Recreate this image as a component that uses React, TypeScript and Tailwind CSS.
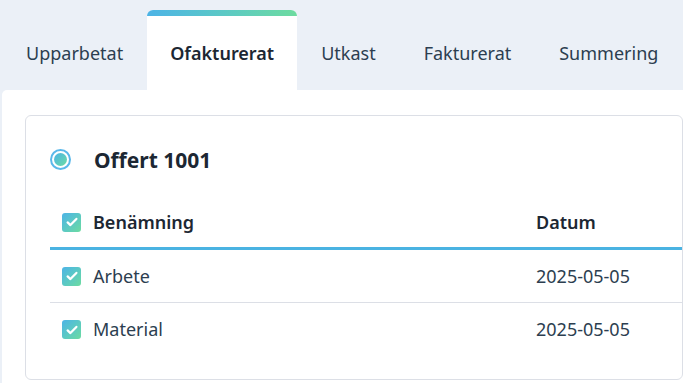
import React from "react";

const tabs = ["Upparbetat", "Ofakturerat", "Utkast", "Fakturerat", "Summering"];

function Check() {
  return (
    <span className="flex h-[19px] w-[19px] shrink-0 items-center justify-center rounded-[3px] bg-gradient-to-br from-[#4db3e6] to-[#6ddb9f]">
      <svg width="14" height="14" viewBox="0 0 16 16" fill="none">
        <path d="M3 8.5l3.2 3L13 4.5" stroke="white" strokeWidth="2.6" strokeLinecap="round" strokeLinejoin="round" />
      </svg>
    </span>
  );
}

export default function App() {
  const font = { fontFamily: '"Noto Sans", "Open Sans", sans-serif' };
  return (
    <div className="h-[383px] w-[683px] overflow-hidden bg-[#ebf0f7] pl-[2px] text-[#2c3e50]" style={font}>
      <div className="flex h-[90px] items-end">
        {tabs.map((t, i) =>
          i === 1 ? (
            <div
              key={t}
              className="relative flex h-[80px] w-[150px] items-center justify-center rounded-t-[6px] bg-white pt-[6px] text-[18px] font-semibold text-[#1c2733]"
            >
              <div className="absolute left-0 right-0 top-0 h-[6px] rounded-t-[6px] bg-gradient-to-r from-[#4db3e6] to-[#6ddb9f]" />
              {t}
            </div>
          ) : (
            <div key={t} className="flex h-[80px] items-center px-6 pt-[6px] text-[18px] text-[#2c3e50]">
              {t}
            </div>
          )
        )}
      </div>
      <div className="h-[293px] rounded-tl-[5px] bg-white pl-[23px] pt-[25px]">
        <div className="h-[265px] rounded-[6px] border border-[#dcdfe6] pl-[24px] pt-[22px]">
          <div className="flex h-[42px] items-center">
            <span className="flex h-[21px] w-[21px] items-center justify-center rounded-full border-2 border-[#5ab8ea] bg-white">
              <span className="h-[13px] w-[13px] rounded-full bg-gradient-to-br from-[#4db3e6] to-[#6ddb9f]" />
            </span>
            <span className="ml-[23px] pt-[3px] text-[21px] font-bold text-[#1c2733]">Offert 1001</span>
          </div>
          <div className="mt-[20px]">
            <div className="flex h-[50px] items-center border-b-[3px] border-[#4ab3e2] pb-[3px]">
              <div className="flex w-[474px] items-center gap-3 pl-3 text-[18px] font-semibold text-[#1c2733]">
                <Check />
                Benämning
              </div>
              <div className="pl-[12px] text-[18px] font-semibold text-[#1c2733]">Datum</div>
            </div>
            {["Arbete", "Material"].map((r, i) => (
              <div
                key={r}
                className={`flex h-[53px] items-center ${i === 0 ? "border-b border-[#dcdfe6]" : ""}`}
              >
                <div className="flex w-[474px] items-center gap-3 pl-3 text-[18px]">
                  <Check />
                  {r}
                </div>
                <div className="pl-[12px] text-[18px]">2025-05-05</div>
              </div>
            ))}
          </div>
        </div>
      </div>
    </div>
  );
}
